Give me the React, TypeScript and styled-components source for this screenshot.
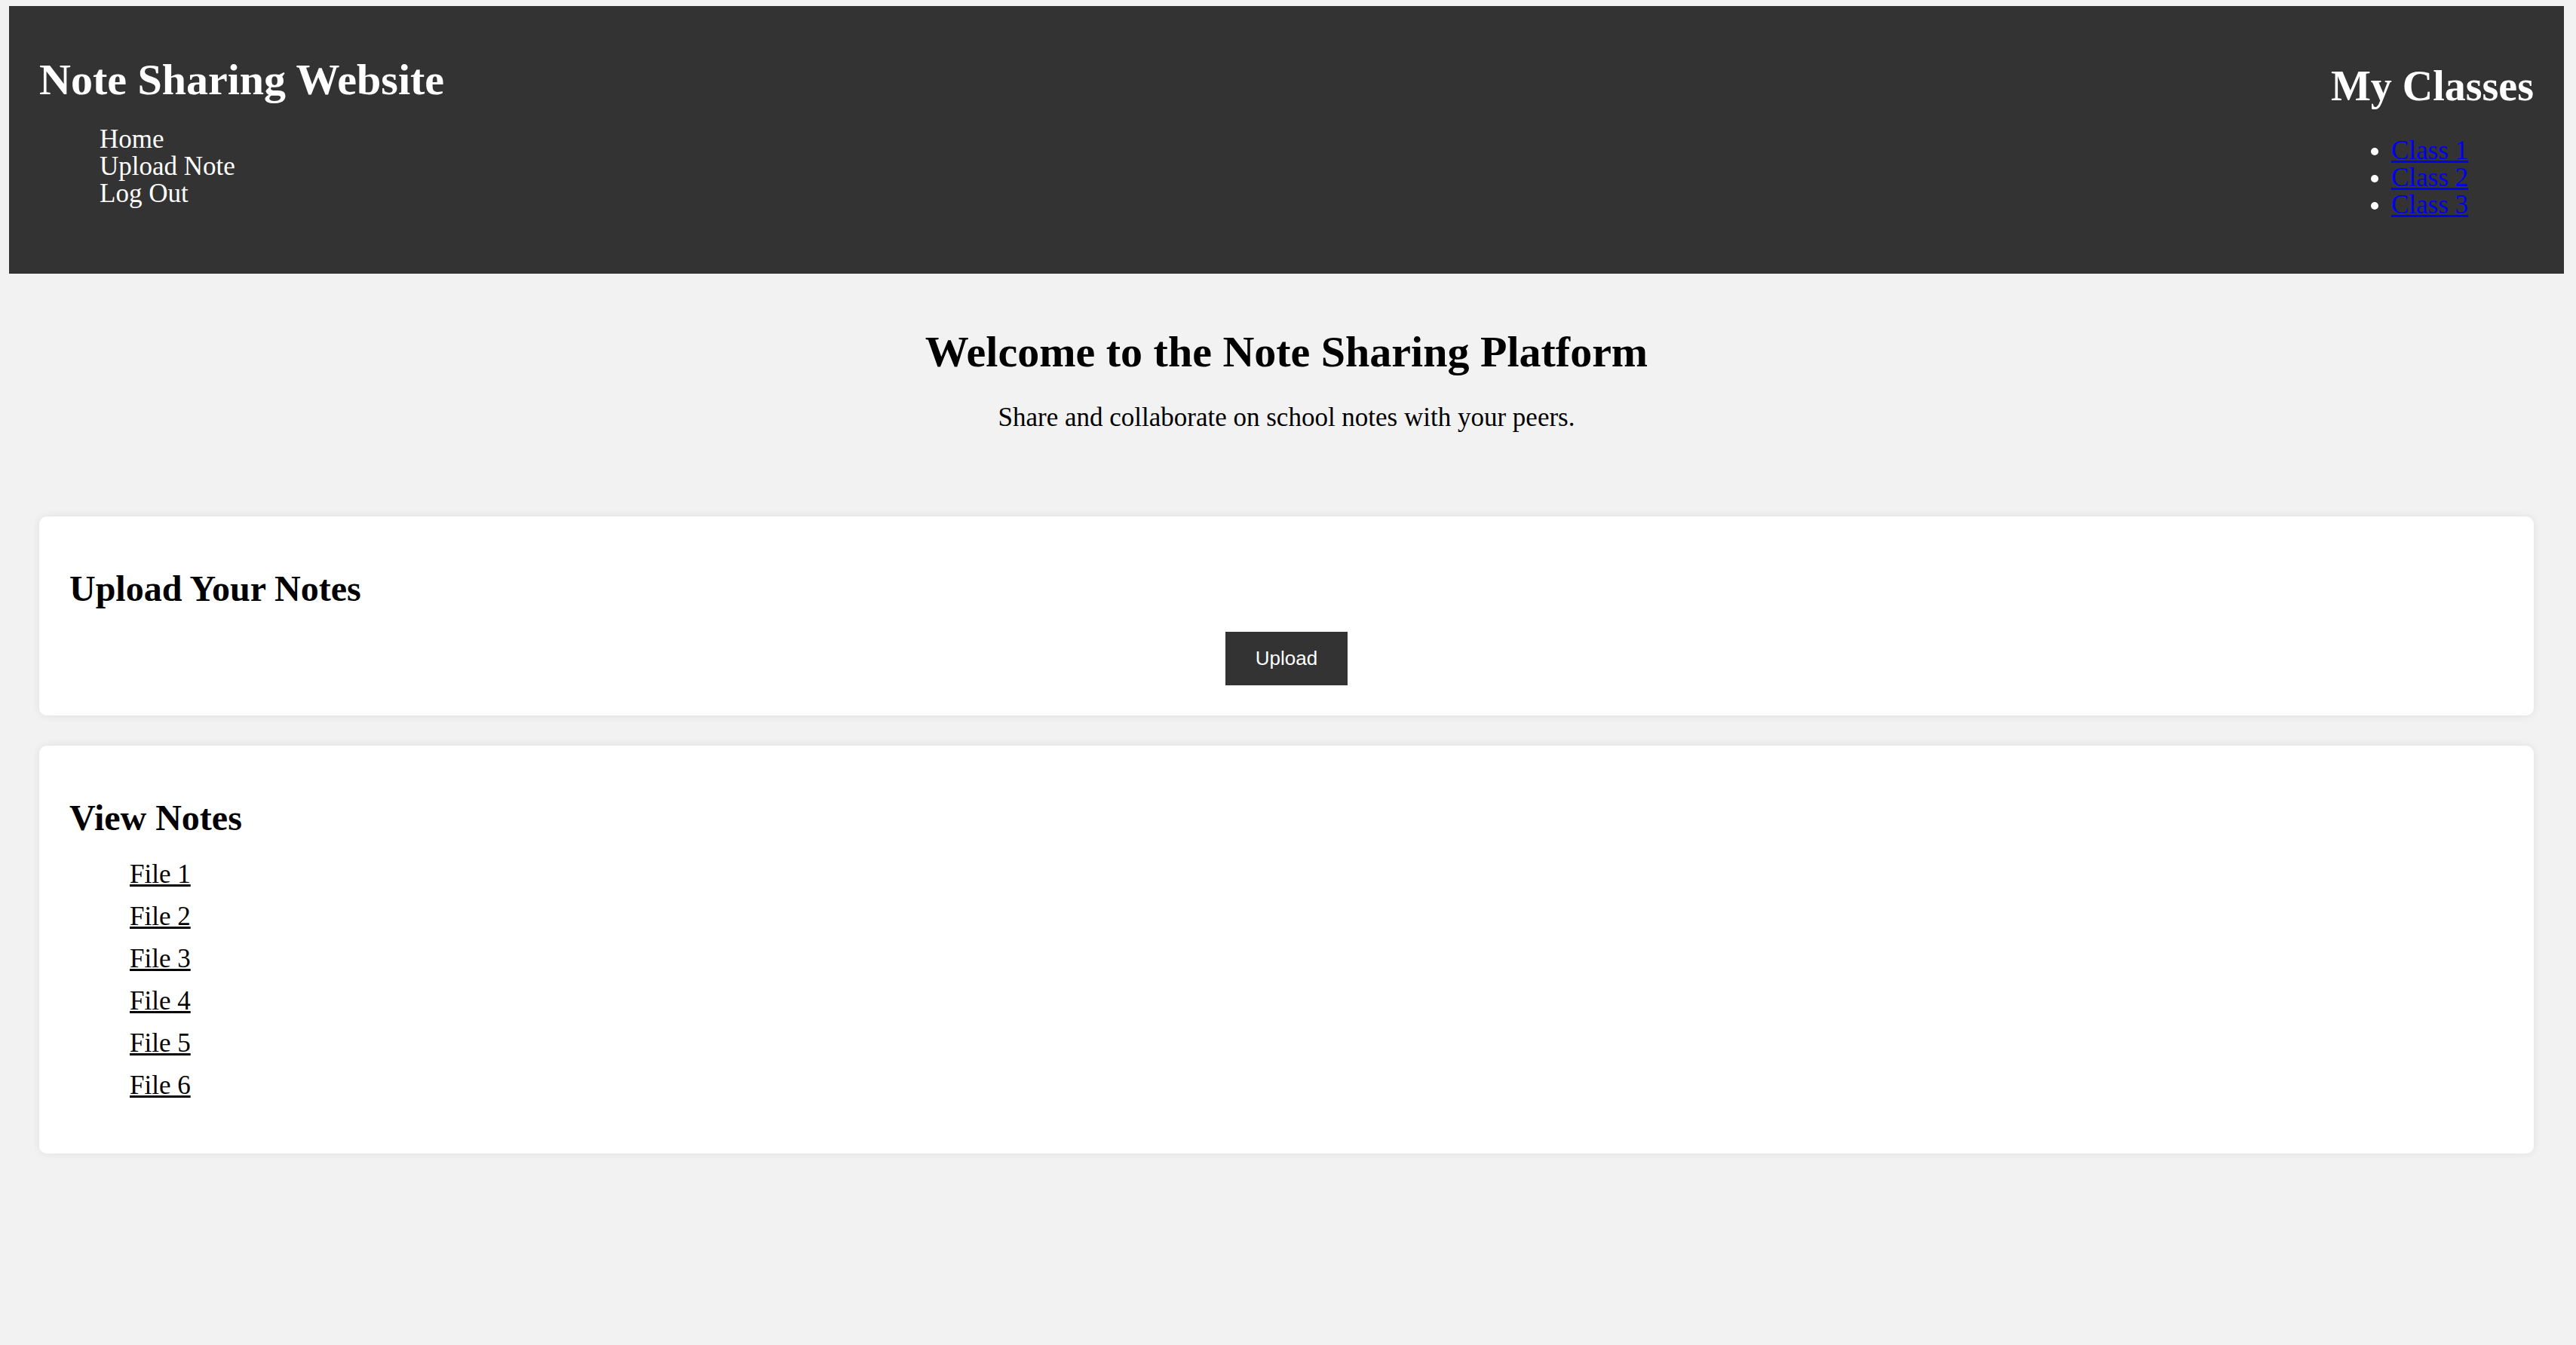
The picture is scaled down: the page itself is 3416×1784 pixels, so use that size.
import styled, { createGlobalStyle } from "styled-components";

const GlobalStyle = createGlobalStyle`
  html, body {
    margin: 0;
    padding: 0;
    min-height: 100%;
    background: #f2f2f2;
  }
  body {
    font-family: "Liberation Serif", "Times New Roman", serif;
    color: #000;
  }
`;

const classes = ["Class 1", "Class 2", "Class 3"];
const files = ["File 1", "File 2", "File 3", "File 4", "File 5", "File 6"];
const navItems = ["Home", "Upload Note", "Log Out"];

const App = () => {
  return (
    <>
      <GlobalStyle />
      <Page>
        <Header>
          <Brand>
            <SiteTitle>Note Sharing Website</SiteTitle>
            <NavList>
              {navItems.map((item) => (
                <li key={item}>
                  <NavLink href="#">{item}</NavLink>
                </li>
              ))}
            </NavList>
          </Brand>
          <ClassPanel>
            <PanelTitle>My Classes</PanelTitle>
            <ClassList>
              {classes.map((c) => (
                <li key={c}>
                  <ClassLink href="#">{c}</ClassLink>
                </li>
              ))}
            </ClassList>
          </ClassPanel>
        </Header>

        <Hero>
          <HeroTitle>Welcome to the Note Sharing Platform</HeroTitle>
          <HeroText>Share and collaborate on school notes with your peers.</HeroText>
        </Hero>

        <Main>
          <Card>
            <CardTitle>Upload Your Notes</CardTitle>
            <ButtonRow>
              <UploadButton type="button">Upload</UploadButton>
            </ButtonRow>
          </Card>

          <Card>
            <CardTitle>View Notes</CardTitle>
            <FileList>
              {files.map((f) => (
                <li key={f}>
                  <FileLink href="#">{f}</FileLink>
                </li>
              ))}
            </FileList>
          </Card>
        </Main>
      </Page>
    </>
  );
};

const Page = styled.div`
  padding: 8px 16px 0 12px;
  min-height: 1784px;
  box-sizing: border-box;
`;

const Header = styled.header`
  display: flex;
  justify-content: space-between;
  align-items: flex-start;
  height: 355px;
  box-sizing: border-box;
  padding: 0 40px;
  background: #333;
  color: #fff;
`;

const Brand = styled.div`
  padding-top: 66px;
`;

const SiteTitle = styled.h2`
  margin: 0;
  font-size: 58px;
  line-height: 64px;
  font-weight: bold;
`;

const PanelTitle = styled(SiteTitle)`
  font-size: 56px;
`;

const NavList = styled.ul`
  list-style: none;
  margin: 29px 0 0;
  padding-left: 80px;
  font-size: 35px;
  line-height: 36px;
`;

const NavLink = styled.a`
  color: #fff;
  text-decoration: none;
`;

const ClassPanel = styled.div`
  padding-top: 74px;
`;

const ClassList = styled.ul`
  list-style: disc;
  margin: 36px 0 0;
  padding-left: 80px;
  font-size: 35px;
  line-height: 36px;
  color: #fff;
`;

const ClassLink = styled.a`
  color: #0000ee;
  text-decoration: underline;
`;

const Hero = styled.section`
  margin-top: 72px;
  text-align: center;
`;

const HeroTitle = styled.h2`
  margin: 0;
  font-size: 58px;
  line-height: 64px;
  font-weight: bold;
`;

const HeroText = styled.p`
  margin: 35px 0 0;
  font-size: 35px;
  line-height: 40px;
`;

const Main = styled.main`
  display: flex;
  flex-direction: column;
  gap: 40px;
  margin-top: 111px;
  padding: 0 40px;
`;

const Card = styled.section`
  background: #fff;
  border-radius: 10px;
  padding: 40px;
  box-shadow: 0 0 12px rgba(0, 0, 0, 0.08);
`;

const CardTitle = styled.h3`
  margin: 28px 0 0;
  font-size: 48px;
  line-height: 56px;
  font-weight: bold;
`;

const ButtonRow = styled.div`
  display: flex;
  justify-content: center;
  margin-top: 29px;
`;

const UploadButton = styled.button`
  border: none;
  border-radius: 0;
  background: #333;
  color: #fff;
  padding: 20px 40px;
  font-family: "Liberation Sans", Arial, sans-serif;
  font-size: 26px;
  line-height: 31px;
  cursor: pointer;
`;

const FileList = styled.ul`
  list-style: none;
  display: flex;
  flex-direction: column;
  gap: 20px;
  margin: 29px 0 32px;
  padding-left: 80px;
  font-size: 35px;
  line-height: 36px;
`;

const FileLink = styled.a`
  color: #000;
  text-decoration: underline;
`;

export default App;
